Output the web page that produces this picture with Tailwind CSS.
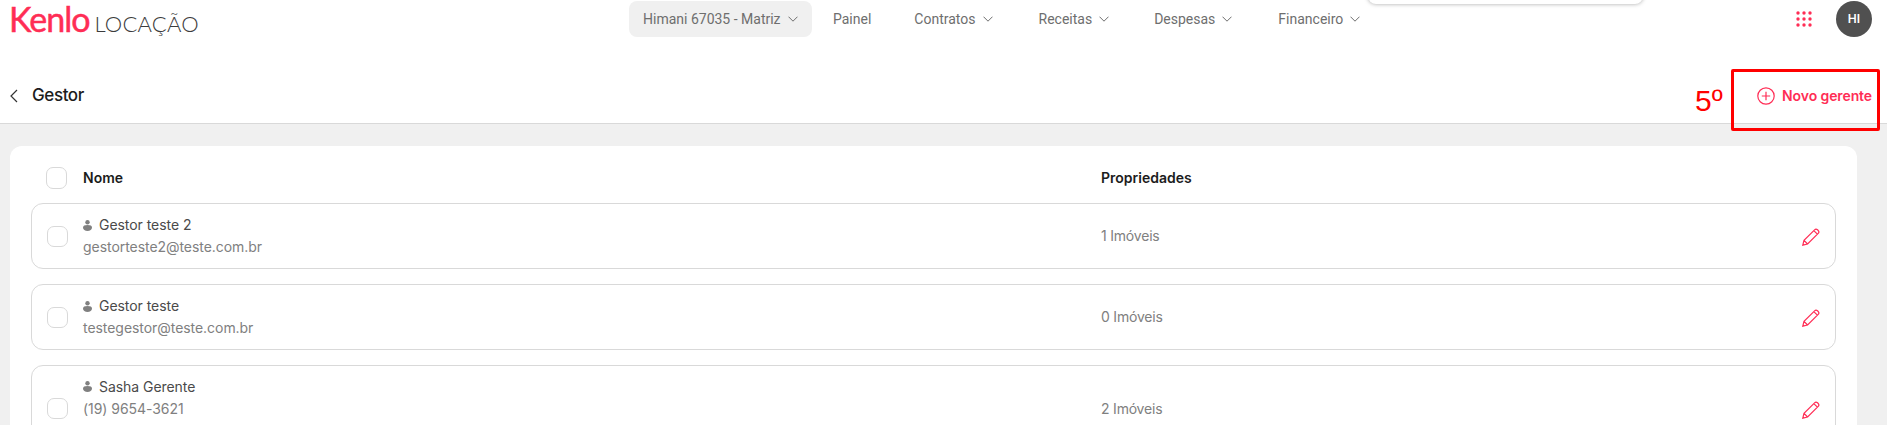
<!DOCTYPE html>
<html lang="en">
<head>
    <meta charset="UTF-8">
    <title>Gestor - Kenlo Locação</title>
    <script src="https://cdn.jsdelivr.net/npm/@tailwindcss/browser@4"></script>
</head>
<body class="relative w-[1887px] h-[425px] overflow-hidden bg-[#f0f0f0] font-['Inter',sans-serif]">

<!-- top nav -->
<header class="relative flex items-start h-[37px] bg-white">
    <div class="flex items-baseline w-[626px] pl-[9px] pt-[2px] h-[37px] leading-none">
        <span class="font-['Lato',sans-serif] text-[34px] font-normal text-[#ff2d55] [-webkit-text-stroke:0.5px_#ff2d55] tracking-[-1px] leading-[33px]">Kenlo</span>
        <span class="ml-[5px] font-['Lato',sans-serif] text-[22px] font-light text-[#3c3c3c] tracking-[0.2px]">LOCAÇÃO</span>
    </div>
    <nav class="ml-[3px] flex items-center h-[36px] mt-px font-['Roboto',sans-serif] text-sm text-[#6e6e6e]">
        <div class="flex items-center gap-[7px] w-[183px] h-[36px] pl-[14px] rounded-lg bg-[#f0f0f0]">
            Himani 67035 - Matriz
            <svg class="w-[10px] h-[6px]" viewBox="0 0 10 6" fill="none" stroke="#6e6e6e"><path d="M.5.7 5 5.2 9.5.7"/></svg>
        </div>
        <span class="ml-[21px]">Painel</span>
        <div class="ml-[43px] flex items-center gap-[7px]">Contratos
            <svg class="w-[10px] h-[6px]" viewBox="0 0 10 6" fill="none" stroke="#6e6e6e"><path d="M.5.7 5 5.2 9.5.7"/></svg>
        </div>
        <div class="ml-[46px] flex items-center gap-[7px]">Receitas
            <svg class="w-[10px] h-[6px]" viewBox="0 0 10 6" fill="none" stroke="#6e6e6e"><path d="M.5.7 5 5.2 9.5.7"/></svg>
        </div>
        <div class="ml-[45px] flex items-center gap-[7px]">Despesas
            <svg class="w-[10px] h-[6px]" viewBox="0 0 10 6" fill="none" stroke="#6e6e6e"><path d="M.5.7 5 5.2 9.5.7"/></svg>
        </div>
        <div class="ml-[46px] flex items-center gap-[7px]">Financeiro
            <svg class="w-[10px] h-[6px]" viewBox="0 0 10 6" fill="none" stroke="#6e6e6e"><path d="M.5.7 5 5.2 9.5.7"/></svg>
        </div>
    </nav>
    <div class="ml-auto mr-[15px] flex items-center gap-[24px] h-[36px] mt-px">
        <svg class="w-[16px] h-[16px]" viewBox="0 0 16 16" fill="#ff2d55">
            <circle cx="2" cy="2" r="1.7"/><circle cx="8" cy="2" r="1.7"/><circle cx="14" cy="2" r="1.7"/>
            <circle cx="2" cy="8" r="1.7"/><circle cx="8" cy="8" r="1.7"/><circle cx="14" cy="8" r="1.7"/>
            <circle cx="2" cy="14" r="1.7"/><circle cx="8" cy="14" r="1.7"/><circle cx="14" cy="14" r="1.7"/>
        </svg>
        <div class="flex items-center justify-center w-[36px] h-[36px] rounded-full bg-[#505050] text-white text-xs font-semibold">HI</div>
    </div>
    <!-- edge of an open dropdown, cut by the top of the screenshot -->
    <div class="absolute left-[1368px] top-[-20px] w-[275px] h-[24px] rounded-lg bg-white shadow-[0_0_4px_rgba(0,0,0,0.35)]"></div>
</header>

<!-- page title bar -->
<div class="flex items-center justify-between h-[87px] pl-[10px] pr-[15px] pt-[31px] bg-white border-b border-[#d9d9d9]">
    <div class="flex items-center">
        <svg class="w-[8px] h-[14px]" viewBox="0 0 8 14" fill="none" stroke="#333" stroke-width="1.2"><path d="M7 1 1 7l6 6"/></svg>
        <span class="ml-[14px] text-[17px] font-medium tracking-[-0.4px] text-[#1c1c1c]">Gestor</span>
    </div>
    <div class="flex items-center gap-[7px] text-sm font-semibold text-[#ff2d55] tracking-[-0.1px]">
        <svg class="w-[18px] h-[18px]" viewBox="0 0 18 18" fill="none" stroke="#ff2d55" stroke-width="1.2"><circle cx="9" cy="9" r="8.2"/><path d="M9 4.8v8.4M4.8 9h8.4"/></svg>
        Novo gerente
    </div>
</div>

<!-- list card -->
<main class="mt-[22px] ml-[10px] w-[1847px] h-[320px] px-[21px] rounded-t-xl bg-white">
    <div class="flex items-center h-[57px] pt-[7px] pl-[15px] text-sm font-semibold text-[#1c1c1c]">
        <div class="w-[21px] h-[22px] rounded-[7px] border border-[#d9d9d9]"></div>
        <span class="ml-[16px] w-[1018px]">Nome</span>
        <span>Propriedades</span>
    </div>

    <div class="flex flex-col gap-[15px]">
        <div class="flex items-center h-[66px] pl-[15px] pr-[15px] rounded-xl border border-[#d9d9d9] text-sm">
            <div class="w-[21px] h-[21px] rounded-[7px] border border-[#d9d9d9]"></div>
            <div class="ml-[15px] w-[1018px] flex flex-col gap-[2px] tracking-[-0.05px]">
                <div class="flex items-center gap-[7px] text-[#4a4a4a]">
                    <svg class="w-[9px] h-[11px]" viewBox="0 0 9 11" fill="#808080"><circle cx="4.5" cy="2.2" r="2.2"/><path d="M0 7.5C0 5.8 1.5 5 4.5 5S9 5.8 9 7.5C9 9.8 7 11 4.5 11S0 9.8 0 7.5Z"/></svg>
                    Gestor teste 2
                </div>
                <div class="text-[#808080]">gestorteste2@teste.com.br</div>
            </div>
            <span class="text-[#808080] tracking-[-0.2px]">1 Imóveis</span>
            <svg class="ml-auto mt-[2px] w-[18px] h-[18px]" viewBox="0 0 18 18" fill="none" stroke="#ff2d55" stroke-width="1.2"><path d="M.8 17.2 2 12.4 12.6 1.8c.8-.8 2-.8 2.9 0l.7.7c.8.8.8 2 0 2.9L5.6 16Zm11-14.6 3.6 3.6M2 12.4 5.6 16"/></svg>
        </div>

        <div class="flex items-center h-[66px] pl-[15px] pr-[15px] rounded-xl border border-[#d9d9d9] text-sm">
            <div class="w-[21px] h-[21px] rounded-[7px] border border-[#d9d9d9]"></div>
            <div class="ml-[15px] w-[1018px] flex flex-col gap-[2px] tracking-[-0.05px]">
                <div class="flex items-center gap-[7px] text-[#4a4a4a]">
                    <svg class="w-[9px] h-[11px]" viewBox="0 0 9 11" fill="#808080"><circle cx="4.5" cy="2.2" r="2.2"/><path d="M0 7.5C0 5.8 1.5 5 4.5 5S9 5.8 9 7.5C9 9.8 7 11 4.5 11S0 9.8 0 7.5Z"/></svg>
                    Gestor teste
                </div>
                <div class="text-[#808080]">testegestor@teste.com.br</div>
            </div>
            <span class="text-[#808080] tracking-[-0.2px]">0 Imóveis</span>
            <svg class="ml-auto mt-[2px] w-[18px] h-[18px]" viewBox="0 0 18 18" fill="none" stroke="#ff2d55" stroke-width="1.2"><path d="M.8 17.2 2 12.4 12.6 1.8c.8-.8 2-.8 2.9 0l.7.7c.8.8.8 2 0 2.9L5.6 16Zm11-14.6 3.6 3.6M2 12.4 5.6 16"/></svg>
        </div>

        <!-- this row is taller, its third line is below the cut of the screenshot -->
        <div class="flex items-center h-[87px] pl-[15px] pr-[15px] rounded-xl border border-[#d9d9d9] text-sm">
            <div class="w-[21px] h-[21px] rounded-[7px] border border-[#d9d9d9]"></div>
            <div class="ml-[15px] w-[1018px] flex flex-col gap-[2px] tracking-[-0.05px]">
                <div class="flex items-center gap-[7px] text-[#4a4a4a]">
                    <svg class="w-[9px] h-[11px]" viewBox="0 0 9 11" fill="#808080"><circle cx="4.5" cy="2.2" r="2.2"/><path d="M0 7.5C0 5.8 1.5 5 4.5 5S9 5.8 9 7.5C9 9.8 7 11 4.5 11S0 9.8 0 7.5Z"/></svg>
                    Sasha Gerente
                </div>
                <div class="text-[#808080]">(19) 9654-3621</div>
                <div class="h-[20px]"></div>
            </div>
            <span class="text-[#808080] tracking-[-0.2px]">2 Imóveis</span>
            <svg class="ml-auto mt-[2px] w-[18px] h-[18px]" viewBox="0 0 18 18" fill="none" stroke="#ff2d55" stroke-width="1.2"><path d="M.8 17.2 2 12.4 12.6 1.8c.8-.8 2-.8 2.9 0l.7.7c.8.8.8 2 0 2.9L5.6 16Zm11-14.6 3.6 3.6M2 12.4 5.6 16"/></svg>
        </div>
    </div>
</main>

<!-- red annotation drawn over the page -->
<span class="absolute left-[1695px] top-[81px] font-['Liberation_Sans',sans-serif] text-[30px] leading-[40px] text-[#ff0000]">5º</span>
<div class="absolute left-[1731px] top-[69px] w-[149px] h-[62px] rounded-[2px] border-[3px] border-[#ff0000]"></div>

</body>
</html>
